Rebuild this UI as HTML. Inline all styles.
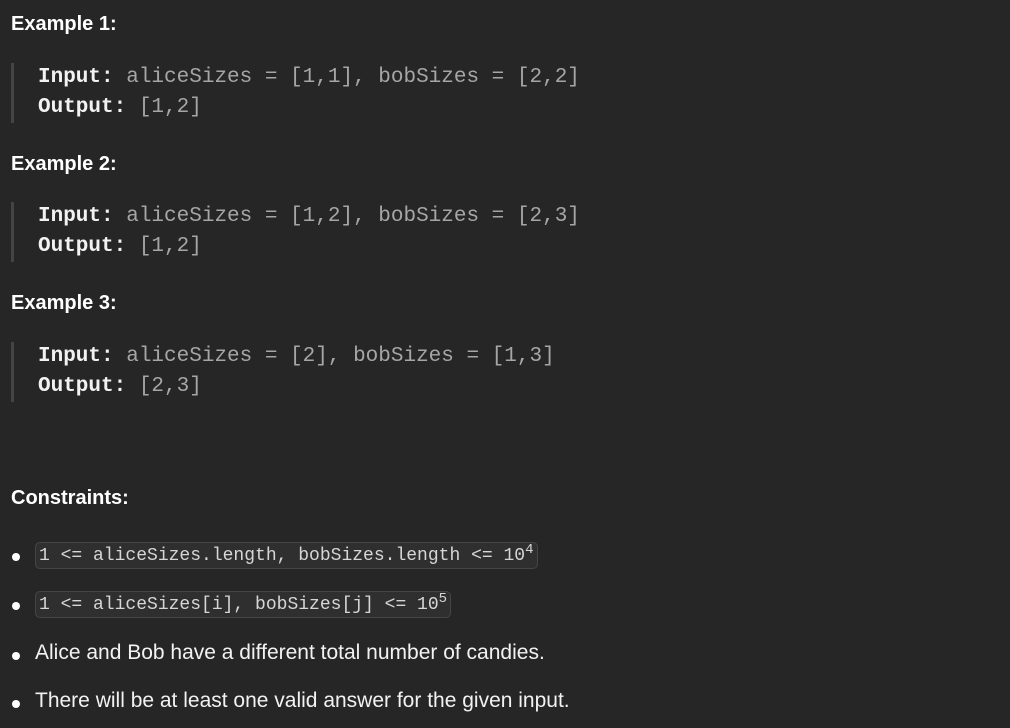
<!DOCTYPE html>
<html><head><style>
html,body{margin:0;background:#262626;width:1010px;height:728px;overflow:hidden;color:#eff1f6;font-family:"Liberation Sans",sans-serif}
.h{position:absolute;left:11px;font-weight:bold;font-size:20px;color:#fff}
.pre{position:absolute;left:11px;border-left:3px solid #444;height:60px;padding-left:24px;font-family:"Liberation Mono",monospace;font-size:21px;line-height:30px;color:#a6a6a6;white-space:pre}
.pre b{color:#f2f2f2}
.li{position:absolute;left:12px;font-size:21px;color:#f2f2f2;white-space:pre}
.li:before{content:"";position:absolute;left:0;top:11px;width:8px;height:8px;border-radius:50%;background:#fff}
.li span.t{margin-left:23px}
code{margin-left:23px;font-family:"Liberation Mono",monospace;font-size:18px;color:#d6d6d6;background:#2f2f2f;border:1px solid #454545;border-radius:5px;padding:3px 3px 2px 3px}
sup{font-size:14px}
</style></head><body>
<div class="h" style="top:13px">Example 1:</div>
<div class="pre" style="top:63px"><b>Input:</b> aliceSizes = [1,1], bobSizes = [2,2]
<b>Output:</b> [1,2]</div>
<div class="h" style="top:153px">Example 2:</div>
<div class="pre" style="top:202px"><b>Input:</b> aliceSizes = [1,2], bobSizes = [2,3]
<b>Output:</b> [1,2]</div>
<div class="h" style="top:292px">Example 3:</div>
<div class="pre" style="top:342px"><b>Input:</b> aliceSizes = [2], bobSizes = [1,3]
<b>Output:</b> [2,3]</div>
<div class="h" style="top:487px">Constraints:</div>
<div class="li" style="top:542px"><code>1 &lt;= aliceSizes.length, bobSizes.length &lt;= 10<sup>4</sup></code></div>
<div class="li" style="top:591px"><code>1 &lt;= aliceSizes[i], bobSizes[j] &lt;= 10<sup>5</sup></code></div>
<div class="li" style="top:641px"><span class="t">Alice and Bob have a different total number of candies.</span></div>
<div class="li" style="top:689px"><span class="t">There will be at least one valid answer for the given input.</span></div>
</body></html>
